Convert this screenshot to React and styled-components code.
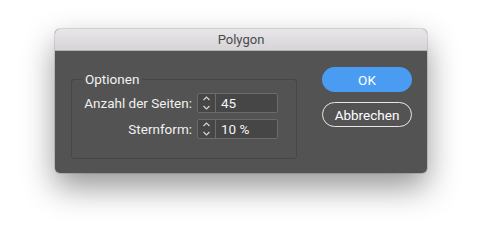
import styled, { createGlobalStyle } from 'styled-components';

const GlobalStyle = createGlobalStyle`
  html, body {
    margin: 0;
    padding: 0;
    background: #ffffff;
  }
  body {
    font-family: Roboto, "Liberation Sans", sans-serif;
  }
`;

const Page = styled.div`
  width: 482px;
  height: 248px;
  padding: 29px 0 0 55px;
  box-sizing: border-box;
`;

const Window = styled.div`
  width: 372px;
  height: 144px;
  border-radius: 5px;
  overflow: hidden;
  background: #535353;
  box-shadow: 0 14px 32px rgba(0, 0, 0, 0.42), 0 0 0 1px rgba(0, 0, 0, 0.12);
  display: flex;
  flex-direction: column;
`;

const TitleBar = styled.div`
  height: 21px;
  flex: none;
  background: linear-gradient(#e8e6e8, #d6d4d6);
  border-bottom: 1px solid #b4b2b4;
  display: flex;
  align-items: center;
  justify-content: center;
  font-size: 13px;
  color: #4a4a4a;
`;

const Body = styled.div`
  flex: 1;
  display: flex;
  padding: 16px 15px 14px 16px;
  gap: 25px;
`;

const GroupBox = styled.fieldset`
  margin: 4px 0 0 0;
  width: 226px;
  box-sizing: border-box;
  border: 1px solid #464646;
  border-radius: 3px;
  padding: 6px 0 0 0;
  display: flex;
  flex-direction: column;
  gap: 6px;
`;

const Legend = styled.legend`
  padding: 0 3px;
  margin-left: 10px;
  font-size: 13.5px;
  color: #f2f2f2;
`;

const Row = styled.div`
  display: flex;
  align-items: center;
  justify-content: flex-end;
  padding-right: 18px;
  gap: 5px;
`;

const Label = styled.span`
  font-size: 13.5px;
  color: #f0f0f0;
`;

const Field = styled.div`
  display: flex;
  width: 81px;
  height: 20px;
  box-sizing: border-box;
  border: 1px solid #6b6b6b;
  border-radius: 2px;
  background: #464646;
`;

const Stepper = styled.div`
  width: 17px;
  border-right: 1px solid #6b6b6b;
  display: flex;
  align-items: center;
  justify-content: center;
`;

const Value = styled.span`
  padding-left: 5px;
  font-size: 13.5px;
  line-height: 18px;
  color: #f4f4f4;
`;

const Buttons = styled.div`
  display: flex;
  flex-direction: column;
  gap: 10px;
`;

const Button = styled.button`
  width: 90px;
  height: 25px;
  border-radius: 13px;
  font-family: inherit;
  font-size: 13.5px;
  color: #ffffff;
  background: ${(p) => (p.$primary ? '#4a9cf3' : 'transparent')};
  border: ${(p) => (p.$primary ? 'none' : '1px solid #e8e8e8')};
  padding: 0;
`;

function Arrows() {
  return (
    <svg width="9" height="16" viewBox="0 0 9 16">
      <path d="M1.5 5 L4.5 2 L7.5 5 M1.5 11 L4.5 14 L7.5 11" fill="none" stroke="#d8d8d8" strokeWidth="1.1" />
    </svg>
  );
}

function NumberField({ value }) {
  return (
    <Field>
      <Stepper>
        <Arrows />
      </Stepper>
      <Value>{value}</Value>
    </Field>
  );
}

export default function App() {
  return (
    <Page>
      <GlobalStyle />
      <Window>
        <TitleBar>Polygon</TitleBar>
        <Body>
          <GroupBox>
            <Legend>Optionen</Legend>
            <Row>
              <Label>Anzahl der Seiten:</Label>
              <NumberField value="45" />
            </Row>
            <Row>
              <Label>Sternform:</Label>
              <NumberField value="10 %" />
            </Row>
          </GroupBox>
          <Buttons>
            <Button $primary>OK</Button>
            <Button>Abbrechen</Button>
          </Buttons>
        </Body>
      </Window>
    </Page>
  );
}
